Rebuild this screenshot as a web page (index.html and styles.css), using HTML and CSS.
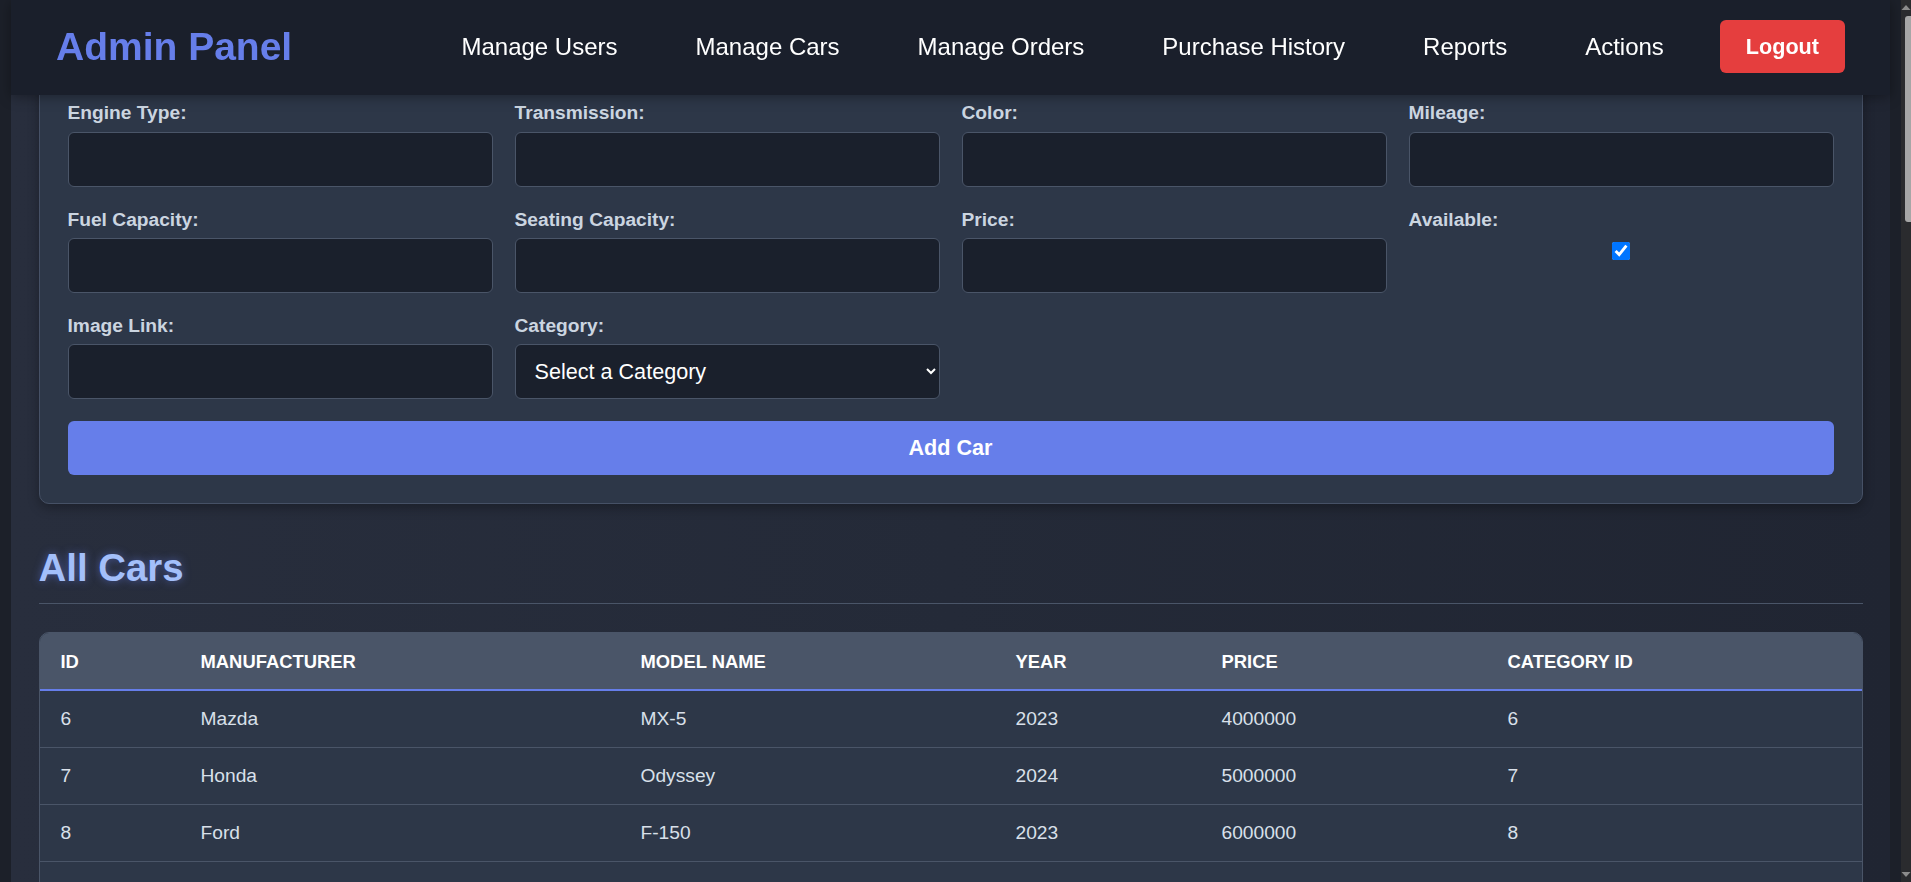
FILE: index.html
```html
<!DOCTYPE html>
<html lang="en">
<head>
<meta charset="utf-8">
<title>Admin Panel - Manage Cars</title>
<link rel="stylesheet" href="styles.css">
</head>
<body>
<header class="topbar">
  <div class="brand">Admin Panel</div>
  <nav class="nav">
    <a class="nav-link" href="#">Manage Users</a>
    <a class="nav-link" href="#">Manage Cars</a>
    <a class="nav-link" href="#">Manage Orders</a>
    <a class="nav-link" href="#">Purchase History</a>
    <a class="nav-link" href="#">Reports</a>
    <a class="nav-link" href="#">Actions</a>
    <a class="logout" href="#">Logout</a>
  </nav>
</header>

<div class="scrollbar" aria-hidden="true">
  <svg class="sb-arrow" width="10" height="16" viewBox="0 0 10 16"><path d="M5 5 L9.5 10 L0.5 10 Z" fill="#8c8c8c"/></svg>
  <div class="sb-track"><div class="sb-thumb"></div></div>
  <svg class="sb-arrow" width="10" height="16" viewBox="0 0 10 16"><path d="M0.5 6 L9.5 6 L5 11 Z" fill="#8c8c8c"/></svg>
</div>

<main class="page">
  <section class="card">
    <form class="form-grid">
      <div class="field"><label class="label">Engine Type:</label><input class="input" type="text"></div>
      <div class="field"><label class="label">Transmission:</label><input class="input" type="text"></div>
      <div class="field"><label class="label">Color:</label><input class="input" type="text"></div>
      <div class="field"><label class="label">Mileage:</label><input class="input" type="text"></div>

      <div class="field"><label class="label">Fuel Capacity:</label><input class="input" type="text"></div>
      <div class="field"><label class="label">Seating Capacity:</label><input class="input" type="text"></div>
      <div class="field"><label class="label">Price:</label><input class="input" type="text"></div>
      <div class="field"><label class="label">Available:</label><input class="check" type="checkbox" checked></div>

      <div class="field"><label class="label">Image Link:</label><input class="input" type="text"></div>
      <div class="field"><label class="label">Category:</label>
        <select class="input select">
          <option>Select a Category</option>
          <option>Sedan</option>
          <option>SUV</option>
        </select>
      </div>

      <button class="submit" type="button">Add Car</button>
    </form>
  </section>

  <section class="list">
    <h2 class="section-title">All Cars</h2>
    <div class="table-wrap">
      <table class="table">
        <colgroup>
          <col class="c-id"><col class="c-man"><col class="c-model"><col class="c-year"><col class="c-price"><col class="c-cat">
        </colgroup>
        <thead>
          <tr><th>ID</th><th>Manufacturer</th><th>Model Name</th><th>Year</th><th>Price</th><th>Category ID</th></tr>
        </thead>
        <tbody>
          <tr><td>6</td><td>Mazda</td><td>MX-5</td><td>2023</td><td>4000000</td><td>6</td></tr>
          <tr><td>7</td><td>Honda</td><td>Odyssey</td><td>2024</td><td>5000000</td><td>7</td></tr>
          <tr><td>8</td><td>Ford</td><td>F-150</td><td>2023</td><td>6000000</td><td>8</td></tr>
          <tr><td>9</td><td>Mercedes-Benz</td><td>S-Class</td><td>2023</td><td>15000000</td><td>9</td></tr>
        </tbody>
      </table>
    </div>
  </section>
</main>
</body>
</html>
```
FILE: styles.css
```css
* {
  box-sizing: border-box;
}

body {
  margin: 0 10px 0 0;
  background: #1c2029;
  font-family: "Liberation Sans", Arial, sans-serif;
  font-size: 19.2px;
  color: #e2e8f0;
}

/* ---------- window scrollbar ---------- */
.scrollbar {
  position: fixed;
  top: 0;
  right: 0;
  bottom: 0;
  width: 10px;
  display: flex;
  flex-direction: column;
  background: #2a2b2e;
  z-index: 20;
}

.sb-arrow {
  display: block;
  flex: none;
}

.sb-track {
  flex: 1;
}

.sb-thumb {
  width: 6px;
  height: 206px;
  margin-left: 4px;
  background: #a6a6a6;
  border-radius: 3px 0 0 3px;
}

/* ---------- header ---------- */
.topbar {
  position: fixed;
  top: 0;
  left: 11px;
  right: 21px;
  height: 95px;
  padding: 0 45px 2px;
  display: flex;
  align-items: center;
  justify-content: space-between;
  background: #1a1f2b;
  box-shadow: 0 2px 12px rgba(0, 0, 0, 0.35);
  z-index: 10;
}

.brand {
  font-size: 39px;
  font-weight: 700;
  color: #667eea;
  white-space: nowrap;
}

.nav {
  display: flex;
  align-items: center;
  gap: 34px;
}

.nav-link {
  padding: 8px 22px;
  font-size: 24px;
  color: #ffffff;
  text-decoration: none;
  white-space: nowrap;
}

.logout {
  padding: 13.6px 26px;
  font-size: 21.6px;
  font-weight: 700;
  color: #ffffff;
  background: #e53e3e;
  border-radius: 6px;
  text-decoration: none;
}

/* ---------- page ---------- */
.page {
  margin: 0 11px;
  padding: 73.4px 27.5px 28px;
  background: linear-gradient(to right, #282e3d 0%, #242a38 50%, #202532 100%);
}

.card {
  background: #2d3748;
  border: 1px solid #465166;
  border-radius: 10px;
  padding: 28px;
  box-shadow: 0 4px 12px rgba(0, 0, 0, 0.3);
}

.form-grid {
  display: grid;
  grid-template-columns: repeat(4, 1fr);
  column-gap: 22px;
  row-gap: 21.6px;
}

.field {
  display: flex;
  flex-direction: column;
  min-width: 0;
}

.label {
  display: block;
  margin-bottom: 7.6px;
  font-size: 19.2px;
  font-weight: 700;
  color: #cbd5e0;
}

.input {
  width: 100%;
  height: 55px;
  padding: 0 18px;
  font-family: "Liberation Sans", Arial, sans-serif;
  font-size: 21.6px;
  color: #ffffff;
  background: #1a202c;
  border: 1px solid #4a5568;
  border-radius: 6px;
  outline: none;
}

.select {
  padding: 0 14px 0 15px;
}

.check {
  width: 18px;
  height: 18px;
  margin: 4px auto 0;
}

.submit {
  grid-column: 1 / -1;
  height: 54px;
  font-family: "Liberation Sans", Arial, sans-serif;
  font-size: 21.6px;
  font-weight: 700;
  color: #ffffff;
  background: #667eea;
  border: none;
  border-radius: 6px;
}

/* ---------- list ---------- */
.list {
  margin-top: 41.6px;
}

.section-title {
  margin: 0 0 28px;
  padding-bottom: 13.6px;
  font-size: 38.4px;
  font-weight: 700;
  color: #a3bffa;
  border-bottom: 1px solid #4a5568;
  text-shadow: 0 0 8px rgba(102, 126, 234, 0.55);
}

.table-wrap {
  border: 1px solid #4a5568;
  border-radius: 10px;
  overflow: hidden;
  background: #2d3748;
}

.table {
  width: 100%;
  table-layout: fixed;
  border-collapse: separate;
  border-spacing: 0;
}

.c-id { width: 140px; }
.c-man { width: 440px; }
.c-model { width: 375px; }
.c-year { width: 206px; }
.c-price { width: 286px; }
.c-cat { width: 375px; }

.table th {
  padding: 17.5px 21px;
  line-height: 21px;
  font-size: 18.4px;
  font-weight: 700;
  text-transform: uppercase;
  text-align: left;
  color: #ffffff;
  background: #4a5568;
  border-bottom: 2px solid #667eea;
}

.table td {
  padding: 17px 21px;
  line-height: 22px;
  font-size: 19.2px;
  color: #d9e0ea;
  border-bottom: 1px solid #4a5568;
}
```
